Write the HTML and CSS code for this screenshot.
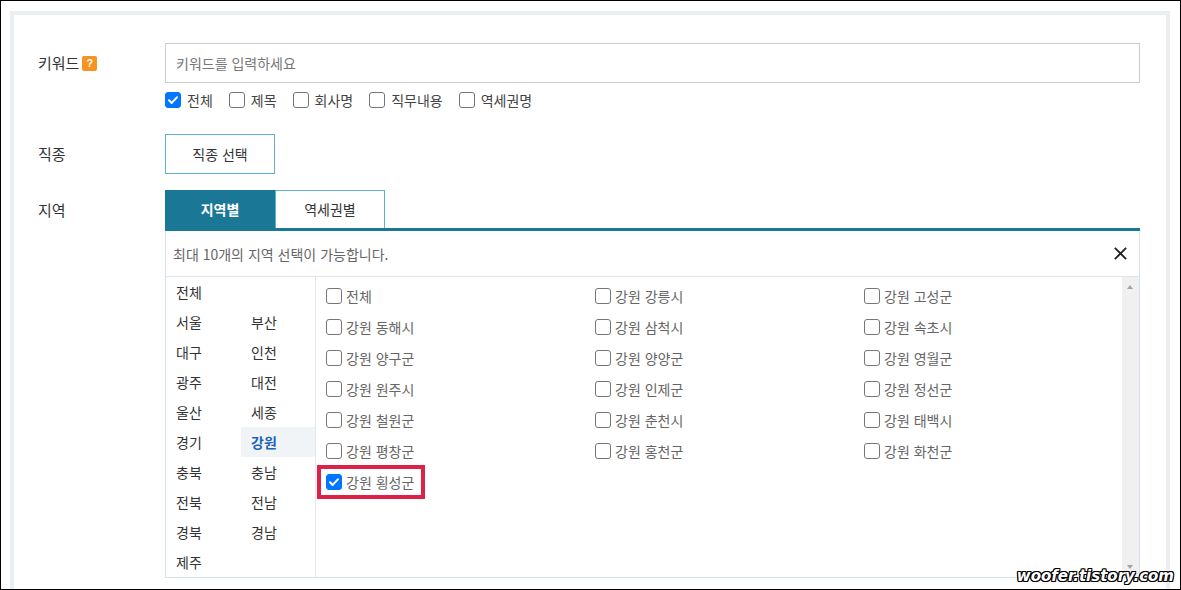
FILE: index.html
```html
<!DOCTYPE html>
<html lang="ko">
<head>
<meta charset="utf-8">
<link rel="stylesheet" href="styles.css">
</head>
<body>
<div class="screen">
  <div class="frame">
    <div class="row">
      <div class="label">키워드 <span class="help">?</span></div>
      <div class="content">
        <div class="input">키워드를 입력하세요</div>
        <div class="opts">
          <label class="opt"><span class="cb on"><svg viewBox="0 0 16 16"><path d="M3.5 8.3l3 3 6-6.3" /></svg></span>전체</label>
          <label class="opt"><span class="cb"></span>제목</label>
          <label class="opt"><span class="cb"></span>회사명</label>
          <label class="opt"><span class="cb"></span>직무내용</label>
          <label class="opt"><span class="cb"></span>역세권명</label>
        </div>
      </div>
    </div>
    <div class="row row-job">
      <div class="label">직종</div>
      <div class="content">
        <div class="btn">직종 선택</div>
      </div>
    </div>
    <div class="row row-region">
      <div class="label">지역</div>
      <div class="content">
        <div class="tabs">
          <div class="tab active">지역별</div>
          <div class="tab">역세권별</div>
        </div>
        <div class="panel">
          <div class="panel-head">
            <span>최대 10개의 지역 선택이 가능합니다.</span>
            <svg class="close" viewBox="0 0 16 16"><path d="M2 2L14 14M14 2L2 14"/></svg>
          </div>
          <div class="panel-body">
            <div class="areas">
              <div class="area">전체</div><div class="area"></div>
              <div class="area">서울</div><div class="area">부산</div>
              <div class="area">대구</div><div class="area">인천</div>
              <div class="area">광주</div><div class="area">대전</div>
              <div class="area">울산</div><div class="area">세종</div>
              <div class="area">경기</div><div class="area sel">강원</div>
              <div class="area">충북</div><div class="area">충남</div>
              <div class="area">전북</div><div class="area">전남</div>
              <div class="area">경북</div><div class="area">경남</div>
              <div class="area">제주</div><div class="area"></div>
            </div>
            <div class="towns">
              <div class="town"><span class="cb"></span>전체</div>
              <div class="town"><span class="cb"></span>강원 강릉시</div>
              <div class="town"><span class="cb"></span>강원 고성군</div>
              <div class="town"><span class="cb"></span>강원 동해시</div>
              <div class="town"><span class="cb"></span>강원 삼척시</div>
              <div class="town"><span class="cb"></span>강원 속초시</div>
              <div class="town"><span class="cb"></span>강원 양구군</div>
              <div class="town"><span class="cb"></span>강원 양양군</div>
              <div class="town"><span class="cb"></span>강원 영월군</div>
              <div class="town"><span class="cb"></span>강원 원주시</div>
              <div class="town"><span class="cb"></span>강원 인제군</div>
              <div class="town"><span class="cb"></span>강원 정선군</div>
              <div class="town"><span class="cb"></span>강원 철원군</div>
              <div class="town"><span class="cb"></span>강원 춘천시</div>
              <div class="town"><span class="cb"></span>강원 태백시</div>
              <div class="town"><span class="cb"></span>강원 평창군</div>
              <div class="town"><span class="cb"></span>강원 홍천군</div>
              <div class="town"><span class="cb"></span>강원 화천군</div>
              <div class="town marked"><span class="cb on"><svg viewBox="0 0 16 16"><path d="M3.5 8.3l3 3 6-6.3" /></svg></span>강원 횡성군</div>
            </div>
            <div class="scrollbar">
              <span class="arrow up"></span>
              <span class="arrow down"></span>
            </div>
          </div>
        </div>
      </div>
    </div>
  </div>
  <div class="watermark">woofer.tistory.com</div>
</div>
</body>
</html>
```
FILE: styles.css
```css
*, *::before, *::after { box-sizing: border-box; }
html, body { margin: 0; padding: 0; background: #fff; }
body {
  font-family: "Noto Sans CJK KR", "Noto Sans", sans-serif;
  color: #333;
  font-size: 14px;
}
.screen {
  position: relative;
  width: 1181px;
  height: 590px;
  border: 1px solid #000;
  padding: 10px 10px 0 9px;
  overflow: hidden;
}
.frame {
  height: 600px;
  border: 4px solid #eceff2;
  border-bottom: none;
  padding: 28px 26px 0 24px;
}
.row { display: flex; }
.label {
  width: 127px;
  flex: none;
  height: 40px;
  line-height: 40px;
  font-size: 15px;
  color: #333;
  display: flex;
  align-items: center;
  gap: 3px;
}
.help {
  display: inline-block;
  width: 15px;
  height: 15px;
  background: #f7931e;
  color: #fff;
  font-family: "Liberation Sans", sans-serif;
  font-weight: bold;
  font-size: 11px;
  line-height: 15px;
  text-align: center;
  border-radius: 2px;
}
.content { flex: 1; min-width: 0; }
.input {
  height: 40px;
  border: 1px solid #cccccc;
  padding-left: 10px;
  line-height: 38px;
  color: #777;
}
.opts {
  display: flex;
  margin-top: 9px;
  height: 16px;
  align-items: center;
}
.opt {
  display: flex;
  align-items: center;
  margin-right: 16px;
  color: #444;
  line-height: 16px;
}
.cb {
  display: inline-block;
  flex: none;
  width: 16px;
  height: 16px;
  border: 1px solid #767676;
  border-radius: 3px;
  background: #fff;
  margin-right: 6px;
}
.cb svg { display: block; width: 14px; height: 14px; }
.cb svg path { fill: none; stroke: #fff; stroke-width: 2.4; stroke-linecap: round; stroke-linejoin: round; }
.cb.on { background: #0075ff; border-color: #0075ff; }
.row-job { margin-top: 26px; }
.btn {
  width: 110px;
  height: 40px;
  border: 1px solid #5db2d0;
  text-align: center;
  line-height: 38px;
  color: #333;
}
.row-region { margin-top: 16px; }
.tabs {
  display: flex;
  border-bottom: 3px solid #1a7896;
}
.tab {
  width: 110px;
  height: 38px;
  line-height: 37px;
  text-align: center;
  border: 1px solid #5db2d0;
  border-bottom: none;
  color: #333;
}
.tab.active {
  background: #1a7896;
  border-color: #1a7896;
  color: #fff;
  font-weight: bold;
}
.panel {
  border: 1px solid #d6e2eb;
  border-top: none;
}
.panel-head {
  height: 46px;
  border-bottom: 1px solid #dde5ec;
  display: flex;
  align-items: center;
  justify-content: space-between;
  padding: 0 11px 0 7px;
  color: #666;
}
.close { width: 15px; height: 15px; }
.close path { stroke: #222; stroke-width: 2; }
.panel-body {
  display: flex;
  height: 300px;
}
.areas {
  width: 150px;
  flex: none;
  border-right: 1px solid #e3e8ec;
  display: grid;
  grid-template-columns: 75px 74px;
  grid-auto-rows: 30px;
}
.area {
  line-height: 30px;
  padding-left: 10px;
  color: #333;
}
.area.sel { background: #f1f4f6; color: #1b64b5; font-weight: bold; }
.towns {
  flex: 1;
  min-width: 0;
  display: grid;
  grid-template-columns: 269px 269px 1fr;
  grid-auto-rows: 31px;
  align-content: start;
  padding: 3px 0 0 10px;
}
.town {
  display: flex;
  align-items: center;
  color: #666;
  position: relative;
}
.town .cb { margin-right: 4px; }
.town.marked::after {
  content: "";
  position: absolute;
  left: -9px;
  top: -1px;
  width: 108px;
  height: 34px;
  border: 4px solid #dc2347;
}
.scrollbar {
  width: 17px;
  flex: none;
  background: #f0f0f0;
  position: relative;
}
.arrow {
  position: absolute;
  left: 5px;
  width: 0;
  height: 0;
  border-left: 3.5px solid transparent;
  border-right: 3.5px solid transparent;
}
.arrow.up { top: 8px; border-bottom: 4px solid #a3a3a3; }
.arrow.down { bottom: 8px; border-top: 4px solid #a3a3a3; }
.watermark {
  position: absolute;
  right: 6px;
  bottom: 4px;
  font-family: "DejaVu Sans", sans-serif;
  font-style: italic;
  font-weight: bold;
  font-size: 15px;
  color: #fff;
  text-shadow: 1px 0 0 #000, -1px 0 0 #000, 0 1px 0 #000, 0 -1px 0 #000, 1px 1px 0 #000, -1px -1px 0 #000, 1px -1px 0 #000, -1px 1px 0 #000;
}
```
